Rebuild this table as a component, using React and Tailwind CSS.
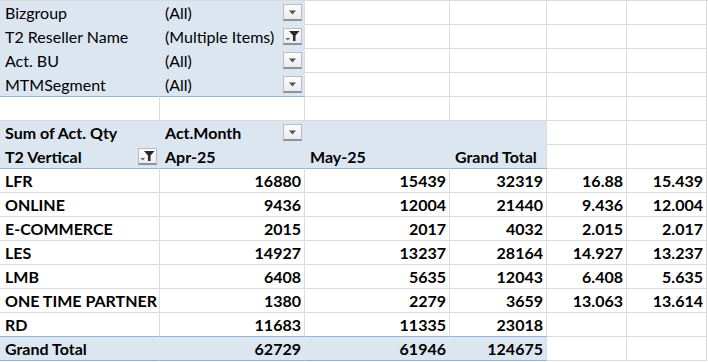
import React from "react";

const COLS = "grid-cols-[160px_145px_145px_97px_80px_80px]";

const rows = [
  ["LFR", 16880, 15439, 32319, "16.88", "15.439"],
  ["ONLINE", 9436, 12004, 21440, "9.436", "12.004"],
  ["E-COMMERCE", 2015, 2017, 4032, "2.015", "2.017"],
  ["LES", 14927, 13237, 28164, "14.927", "13.237"],
  ["LMB", 6408, 5635, 12043, "6.408", "5.635"],
  ["ONE TIME PARTNER", 1380, 2279, 3659, "13.063", "13.614"],
  ["RD", 11683, 11335, 23018, "", ""],
];

const filters = [
  ["Bizgroup", "(All)", false],
  ["T2 Reseller Name", "(Multiple Items)", true],
  ["Act. BU", "(All)", false],
  ["MTMSegment", "(All)", false],
];

// plain worksheet cell with gridlines
function Cell({ children, right, bold, className = "" }) {
  return (
    <div
      className={
        "relative flex items-end h-[24px] border-r border-b border-[#dadcdd] pb-[2px] whitespace-nowrap " +
        (right ? "justify-end pr-[3px] " : "pl-[5px] ") +
        (bold ? "font-bold " : "") +
        className
      }
    >
      {children}
    </div>
  );
}

// pivot cell, filled light blue
function Fill({ children, right, bold, blueBottom, blueRight, className = "" }) {
  return (
    <div
      className={
        "relative flex items-end h-[24px] bg-[#dce6f1] border-r border-b whitespace-nowrap pb-[2px] " +
        (blueBottom ? "border-b-[#95b3d7] " : "border-b-[#dce6f1] ") +
        (blueRight ? "border-r-[#dadcdd] " : "border-r-[#dce6f1] ") +
        (right ? "justify-end pr-[3px] " : "pl-[5px] ") +
        (bold ? "font-bold " : "") +
        className
      }
    >
      {children}
    </div>
  );
}

function DropButton({ filtered }) {
  return (
    <div className="absolute right-[2px] top-[3px] w-[19px] h-[17px] bg-gradient-to-b from-[#fdfdfd] to-[#e9ebee] border border-[#b9bcc0] border-b-2 border-b-[#8f9296] flex items-center justify-center">
      {filtered ? (
        <svg width="15" height="12" viewBox="0 0 15 12">
          <path d="M0.5 8h4.5l-2.25 2.5z" fill="#666" />
          <path d="M4 1h10.5l-4 4.5v5.5h-2.5v-5.5z" fill="#2a2a2a" />
        </svg>
      ) : (
        <svg width="9" height="5" viewBox="0 0 9 5">
          <path d="M1 0.5h7l-3.5 4z" fill="#555" />
        </svg>
      )}
    </div>
  );
}

export default function App() {
  return (
    <div className="w-[708px] h-[362px] bg-white overflow-hidden text-black text-[16px] leading-[18px] [font-family:Lato,'Liberation_Sans',sans-serif]">
      <div className={"grid border-t border-[#dadcdd] " + COLS}>
        {/* report filters */}
        {filters.map(([name, val, filt], i) => (
          <React.Fragment key={name}>
            <Fill blueBottom={i === 3}>{name}</Fill>
            <Fill blueBottom={i === 3} blueRight>
              {val}
              <DropButton filtered={filt} />
            </Fill>
            <Cell />
            <Cell />
            <Cell />
            <Cell />
          </React.Fragment>
        ))}
        <Cell />
        <Cell />
        <Cell />
        <Cell />
        <Cell />
        <Cell />

        {/* pivot header */}
        <Fill bold>Sum of Act. Qty</Fill>
        <Fill bold>
          Act.Month
          <DropButton />
        </Fill>
        <Fill />
        <Fill blueRight />
        <Cell />
        <Cell />

        <Fill bold blueBottom>
          T2 Vertical
          <DropButton filtered />
        </Fill>
        <Fill bold blueBottom>Apr-25</Fill>
        <Fill bold blueBottom>May-25</Fill>
        <Fill bold blueBottom blueRight>Grand Total</Fill>
        <Cell />
        <Cell />

        {/* data */}
        {rows.map((r, i) => {
          const last = i === rows.length - 1;
          const b = last ? "border-b-[#95b3d7]" : "";
          return (
            <React.Fragment key={r[0]}>
              <Cell bold className={b}>{r[0]}</Cell>
              <Cell bold right className={b}>{r[1]}</Cell>
              <Cell bold right className={b}>{r[2]}</Cell>
              <Cell bold right className={b}>{r[3]}</Cell>
              <Cell bold right>{r[4]}</Cell>
              <Cell bold right>{r[5]}</Cell>
            </React.Fragment>
          );
        })}

        {/* grand total */}
        <Fill bold blueBottom>Grand Total</Fill>
        <Fill bold right blueBottom>62729</Fill>
        <Fill bold right blueBottom>61946</Fill>
        <Fill bold right blueBottom blueRight>124675</Fill>
        <Cell />
        <Cell />
      </div>
    </div>
  );
}
